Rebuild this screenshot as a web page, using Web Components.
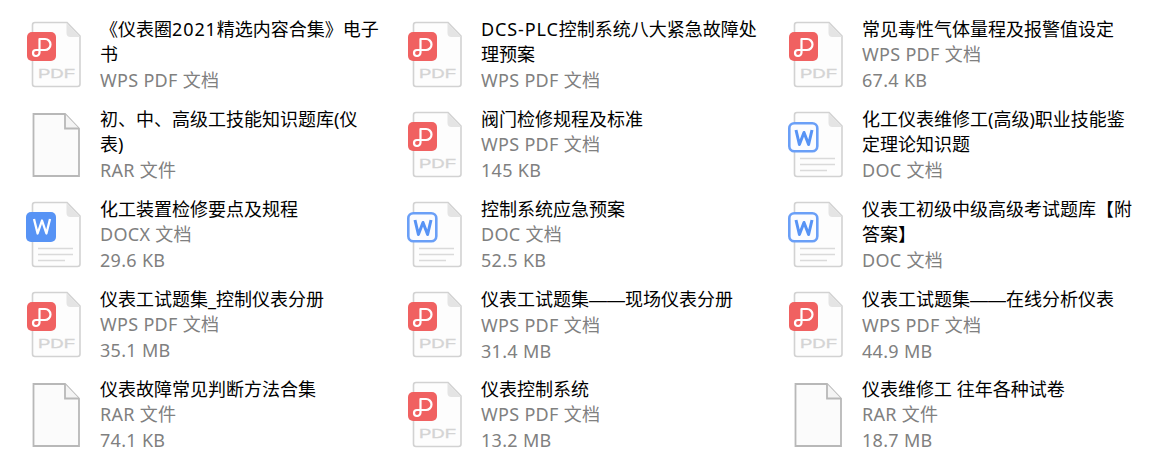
<!DOCTYPE html>
<html lang="zh">
<head>
<meta charset="utf-8">
<title>文件列表</title>
<style>
    html, body { margin: 0; background: #fff; }
</style>
</head>
<body>
<file-grid>
    <file-item type="pdf" meta="WPS PDF 文档">《仪表圈<latin-run>2021</latin-run>精选内容合集》电子<wbr>书</file-item>
    <file-item type="pdf" meta="WPS PDF 文档"><latin-run>DCS-PLC</latin-run>控制系统八大紧急故障处<wbr>理预案</file-item>
    <file-item type="pdf" meta="WPS PDF 文档" size="67.4 KB">常见毒性气体量程及报警值设定</file-item>
    <file-item type="rar" meta="RAR 文件">初、中、高级工技能知识题库(仪表)</file-item>
    <file-item type="pdf" meta="WPS PDF 文档" size="145 KB">阀门检修规程及标准</file-item>
    <file-item type="doc" meta="DOC 文档">化工仪表维修工(高级)职业技能鉴定理论知识题</file-item>
    <file-item type="docx" meta="DOCX 文档" size="29.6 KB">化工装置检修要点及规程</file-item>
    <file-item type="doc" meta="DOC 文档" size="52.5 KB">控制系统应急预案</file-item>
    <file-item type="doc" meta="DOC 文档">仪表工初级中级高级考试题库【附答案】</file-item>
    <file-item type="pdf" meta="WPS PDF 文档" size="35.1 MB">仪表工试题集_控制仪表分册</file-item>
    <file-item type="pdf" meta="WPS PDF 文档" size="31.4 MB">仪表工试题集<dash-run>——</dash-run>现场仪表分册</file-item>
    <file-item type="pdf" meta="WPS PDF 文档" size="44.9 MB">仪表工试题集<dash-run>——</dash-run>在线分析仪表</file-item>
    <file-item type="rar" meta="RAR 文件" size="74.1 KB">仪表故障常见判断方法合集</file-item>
    <file-item type="pdf" meta="WPS PDF 文档" size="13.2 MB">仪表控制系统</file-item>
    <file-item type="rar" meta="RAR 文件" size="18.7 MB">仪表维修工 往年各种试卷</file-item>
</file-grid>
<script>
const pageShape = `
    <path d="M8.500 10a2.500 2.500 0 0 1 2.500-2.500h32l13 13.500v48a2.500 2.500 0 0 1-2.500 2.500H11a2.500 2.500 0 0 1-2.500-2.500z" fill="#fdfdfd" stroke="#d2d2d2" stroke-width="1.600"/>
    <path d="M42.500 8v10a4 4 0 0 0 4 4h9.500z" fill="#e4e4e4"/>`;

const icons = {
    pdf: `${pageShape}
        <text x="14" y="63" font-family="'Liberation Sans', sans-serif" font-size="12.500" textLength="37" lengthAdjust="spacingAndGlyphs" fill="#d4d4d4" stroke="#d4d4d4" stroke-width="0.300">PDF</text>
        <rect x="3" y="17" width="29" height="29" rx="5" fill="#f06161"/>
        <path d="M15.500 24v13.500a3.500 3.500 0 0 1-3.500 3.500a3 3 0 0 1 0-6h9a5.500 5.500 0 0 0 0-11h-5.500" fill="none" stroke="#fff" stroke-width="2.200" stroke-linecap="round"/>`,
    docx: `${pageShape}
        <path d="M14 53.500h35M14 59.500h35M14 65.500h27" stroke="#dadada" stroke-width="1.500"/>
        <rect x="2" y="17" width="30" height="30" rx="5" fill="#5793f5"/>
        <path d="M10 24l3.600 14.500 4.400-13 4.400 13 3.600-14.500" fill="none" stroke="#fff" stroke-width="2.300" stroke-linejoin="round"/>`,
    doc: `${pageShape}
        <path d="M14 53.500h35M14 59.500h35M14 65.500h27" stroke="#dadada" stroke-width="1.500"/>
        <rect x="3.300" y="18.300" width="28" height="28" rx="5" fill="#fbfcff" stroke="#6a9ff7" stroke-width="2.600"/>
        <path d="M10 25l3.400 14.500 4.600-12 4.600 12 3.400-14.500" fill="none" stroke="#5793f5" stroke-width="3" stroke-linejoin="round"/>`,
    rar: `
        <path d="M9.500 9H41L55 23.500V71H9.500z" fill="#fbfbfb" stroke="#b8b8b8" stroke-width="1.800"/>
        <path d="M41 9V23.500H55" fill="#f4f4f4" stroke="#b8b8b8" stroke-width="1.800"/>`
};

class FileGrid extends HTMLElement {
    constructor() {
        super();
        this.attachShadow({ mode: 'open' });
    }

    connectedCallback() {
        this.shadowRoot.innerHTML = `
            <style>
                :host {
                    display: grid;
                    grid-template-columns: repeat(3, 381px);
                    grid-auto-rows: 90px;
                    padding: 15px 0 0 24px;
                    font-family: "Noto Sans", "Noto Sans CJK SC", sans-serif;
                }
            </style>
            <slot></slot>
        `;
    }
}

class FileItem extends HTMLElement {
    constructor() {
        super();
        this.attachShadow({ mode: 'open' });
    }

    connectedCallback() {
        const type = this.getAttribute('type');
        const meta = this.getAttribute('meta');
        const size = this.getAttribute('size');
        this.shadowRoot.innerHTML = `
            <style>
                :host {
                    display: flex;
                    gap: 12px;
                    height: 80px;
                }
                svg { flex: none; }
                .text {
                    width: 280px;
                    margin-top: 1.6px;
                    font-size: 18px;
                    line-height: 25.6px;
                }
                .name { color: #000; }
                .sub { color: #808080; letter-spacing: 0.3px; }
            </style>
            <svg width="64" height="74" viewBox="0 0 64 74">${icons[type]}</svg>
            <div class="text">
                <div class="name"><slot></slot></div>
                <div class="sub">${meta}</div>
                ${size ? `<div class="sub">${size}</div>` : ''}
            </div>
        `;
    }
}

// Latin words in a title run a little wider than the font's own spacing.
// No whitespace around the slot: these hosts are inline, it would show as a space.
class LatinRun extends HTMLElement {
    constructor() {
        super();
        this.attachShadow({ mode: 'open' });
    }

    connectedCallback() {
        this.shadowRoot.innerHTML = `<style>:host { display: inline; letter-spacing: 0.9px; }</style><slot></slot>`;
    }
}

// Em dashes that join up into one line
class DashRun extends HTMLElement {
    constructor() {
        super();
        this.attachShadow({ mode: 'open' });
    }

    connectedCallback() {
        this.shadowRoot.innerHTML = `<style>:host { display: inline; font-family: "Liberation Sans", sans-serif; }</style><slot></slot>`;
    }
}

customElements.define('file-grid', FileGrid);
customElements.define('file-item', FileItem);
customElements.define('latin-run', LatinRun);
customElements.define('dash-run', DashRun);
</script>
</body>
</html>
